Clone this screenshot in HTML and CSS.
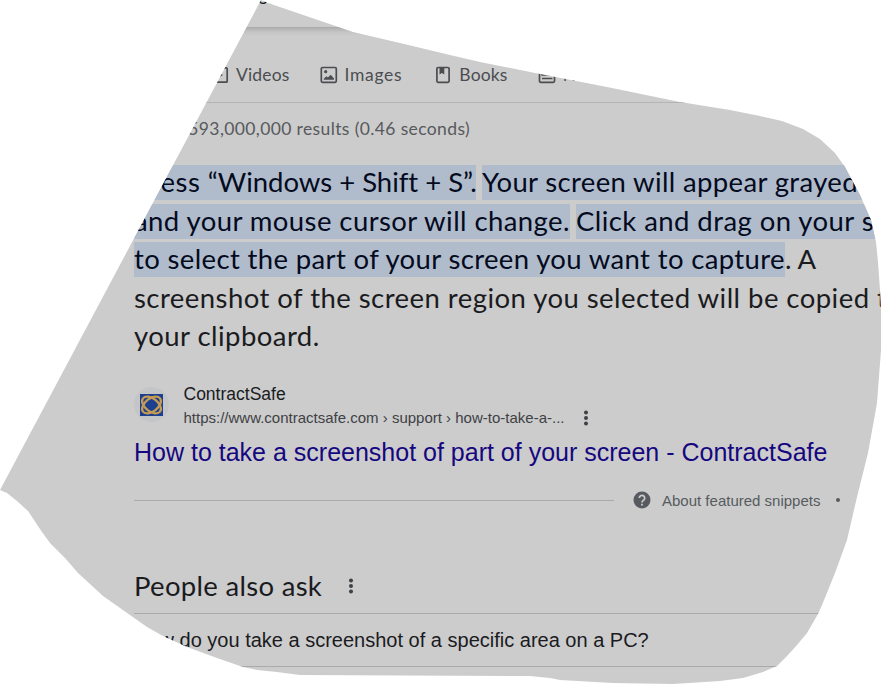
FILE: index.html
```
<!DOCTYPE html>
<html lang="en">
<head>
<meta charset="utf-8">
<title>Search results</title>
<link rel="stylesheet" href="styles.css">
</head>
<body>
<main class="page">
  <header class="searchbar"><span class="query">screenshot</span></header>
  <nav class="tabs">
    <span class="tab videos"><svg width="18" height="18" viewBox="0 0 18 18"><rect x="1" y="1.8" width="15.2" height="14.4" rx="1" class="line"/><path d="M6 5.5l6 3.500-6 3.500z" class="solid"/></svg><span>Videos</span></span>
    <span class="tab images"><svg width="18" height="18" viewBox="0 0 18 18"><rect x="1.300" y="1.500" width="15" height="14.800" rx="1.200" class="line"/><circle cx="5.700" cy="5.700" r="1.600" class="solid"/><path d="M3.800 13.700v-1l2.600-2.500 1.500 1.400 2.800-2.900 3.300 3.700v1.300z" class="solid"/></svg><span>Images</span></span>
    <span class="tab books"><svg width="18" height="18" viewBox="0 0 18 18"><rect x="2.900" y="1.500" width="12.200" height="14.800" rx="1.200" class="line"/><path d="M5.500 1.500h4.800v7l-2.400-1.600-2.400 1.600z" class="solid"/></svg><span>Books</span></span>
    <span class="tab news"><svg width="18" height="18" viewBox="0 0 18 18"><rect x="1.500" y="1.500" width="15" height="14.800" rx="1.200" class="line"/><path d="M4 5h4v4H4zM9.500 6h5M9.500 9h5M4 12.500h10.500" class="line"/></svg><span>News</span></span>
  </nav>
  <div class="stats">About 593,000,000 results (0.46 seconds)</div>
  <section class="snippet">
    <p class="row"><mark class="press"><span class="first">Press </span>“Windows + Shift + S”.</mark><mark class="your">Your screen will appear grayed out</mark></p>
    <p class="row"><mark class="mouse">and your mouse cursor will change.</mark><mark class="click">Click and drag on your screen</mark></p>
    <p class="row"><mark class="select">to select the part of your screen you want to capture</mark><span>. A</span></p>
    <p class="row copied">screenshot of the screen region you selected will be copied to</p>
    <p class="row copied">your clipboard.</p>
  </section>
  <section class="source">
    <span class="favicon"><svg width="23" height="22" viewBox="0 0 23 22"><path d="M0 0h23v22H0z" fill="#1c3f8f"/><g fill="none" stroke="#c49c54" stroke-width="2.300"><ellipse cx="11.500" cy="11" rx="10.800" ry="6.400" transform="rotate(38 11.500 11)"/><ellipse cx="11.500" cy="11" rx="10.800" ry="6.400" transform="rotate(-38 11.500 11)"/></g></svg></span>
    <div class="site"><div class="name">ContractSafe</div><div class="url">https://www.contractsafe.com › support › how-to-take-a-...<i class="dots"></i></div></div>
  </section>
  <h3 class="title">How to take a screenshot of part of your screen - ContractSafe</h3>
  <div class="about"><hr><svg width="18" height="18" viewBox="0 0 18 18"><circle cx="9" cy="9" r="8.500" fill="#575b60"/><path d="M6.300 7a2.700 2.700 0 1 1 4.300 2.200c-.9.650-1.600 1-1.600 2.200" fill="none" stroke="#ccc" stroke-width="1.700"/><path d="M8.100 12.700h1.800v1.800H8.100z" fill="#ccc"/></svg><span>About featured snippets</span><b></b></div>
  <div class="ask"><span>People also ask</span><i class="dots"></i></div>
  <div class="question">How do you take a screenshot of a specific area on a PC?</div>
</main>
</body>
</html>
```
FILE: styles.css
```
* { box-sizing: border-box; }
body { margin: 0; width: 881px; height: 684px; overflow: hidden; background: #fff; font-family: "Liberation Sans", Arial, sans-serif; }
.page {
  width: 881px; height: 684px; overflow: hidden; background: #ccc; color: #1a1b1e;
  display: flex; flex-direction: column; white-space: nowrap;
  clip-path: polygon(261px 0, 268px 3px, 315px 19px, 353px 32px, 400px 43px, 450px 55px, 480px 62px, 540px 74px, 607px 87px, 680px 102px, 730px 110px, 760px 116px, 782px 121px, 803px 129px, 820px 139px, 835px 153px, 845px 167px, 860px 195px, 871px 220px, 876px 242px, 878px 262px, 880px 290px, 881px 310px, 881px 350px, 877px 403px, 868px 453px, 857px 497px, 847px 540px, 835px 573px, 822px 605px, 818px 614px, 807px 633px, 797px 645px, 788px 655px, 777px 666px, 763px 672px, 743px 678px, 720px 681px, 673px 684px, 613px 683px, 560px 680px, 550px 678px, 530px 676px, 300px 675px, 277px 672px, 257px 670px, 243px 667px, 217px 658px, 187px 647px, 163px 636px, 147px 627px, 130px 615px, 103px 596px, 78px 573px, 65px 558px, 50px 543px, 42px 532px, 28px 511px, 17px 501px, 7px 493px, 0 490px);
}
.searchbar { height: 27px; flex: none; padding-left: 176px; line-height: 20px; box-shadow: 0 1px 7px rgba(0,0,0,.28); font-size: 20px; }
.query { display: block; margin-top: -13px; }
.tabs { height: 76px; flex: none; border-bottom: 1px solid #b3b4b6; display: flex; align-items: center; padding: 20px 0 0 211px; font: 17.5px Lato, sans-serif; color: #4b4d51; }
.tab { display: flex; align-items: center; flex: none; }
.tab svg { margin-right: 7px; }
.videos { letter-spacing: .15px; }
.images { margin-left: 30px; letter-spacing: .7px; }
.books { margin-left: 32px; letter-spacing: .1px; }
.news { margin-left: 30.5px; }
.line { fill: none; stroke: #4b4d51; stroke-width: 1.7; }
.solid { fill: #4b4d51; }
.stats { height: 62px; flex: none; padding-left: 134px; font: 17.5px/51px Lato, sans-serif; letter-spacing: .376px; color: #57595d; }
.snippet { padding-left: 134px; height: 210px; flex: none; font: 27.5px Lato, sans-serif; }
.row { margin: 0 0 3.5px; height: 35px; line-height: 33px; display: flex; white-space: pre; }
.row mark { background: #b0bccb; color: #040a20; height: 35px; flex: none; }
.row mark + mark { margin-left: 6px; }
.press { width: 342px; letter-spacing: -.02px; }
.first { letter-spacing: .45px; }
.your { letter-spacing: .35px; }
.mouse { letter-spacing: .424px; }
.click { letter-spacing: .432px; }
.select { letter-spacing: .362px; }
.copied { letter-spacing: .453px; }
.source { display: flex; padding-left: 134px; height: 57px; flex: none; }
.favicon { width: 35px; height: 35px; margin-top: 12px; border-radius: 50%; background: #c3c5c7; display: flex; align-items: center; justify-content: center; }
.site { margin-left: 14.5px; padding-top: 7px; }
.name { font-size: 17.5px; line-height: 24px; }
.url { font-size: 15px; line-height: 24px; color: #3e4145; display: flex; align-items: center; }
.dots { width: 4px; height: 4px; border-radius: 50%; background: #3e4145; box-shadow: 0 -5.500px #3e4145, 0 5.500px #3e4145; margin-left: 19.5px; }
.title { margin: 0; height: 54px; flex: none; padding-left: 134px; font-size: 25px; line-height: 40px; font-weight: 400; color: #15077f; }
.about { height: 28px; flex: none; display: flex; align-items: center; padding-left: 134px; color: #575b60; font-size: 15px; }
.about hr { width: 480px; margin: 0; border: 0; height: 1px; background: #a9aaab; }
.about svg { margin: 0 11px 0 19px; }
.about b { width: 4px; height: 4px; border-radius: 50%; background: #575b60; margin-left: 15.5px; }
.ask { height: 99px; flex: none; padding: 43px 0 0 134px; display: flex; align-items: center; font: 27.5px Lato, sans-serif; letter-spacing: .3px; }
.ask .dots { margin: 1px 0 0 27px; }
.question { margin-left: 134px; height: 54px; flex: none; border: solid #a9aaab; border-width: 1px 0; font-size: 20px; line-height: 52px; }
```
